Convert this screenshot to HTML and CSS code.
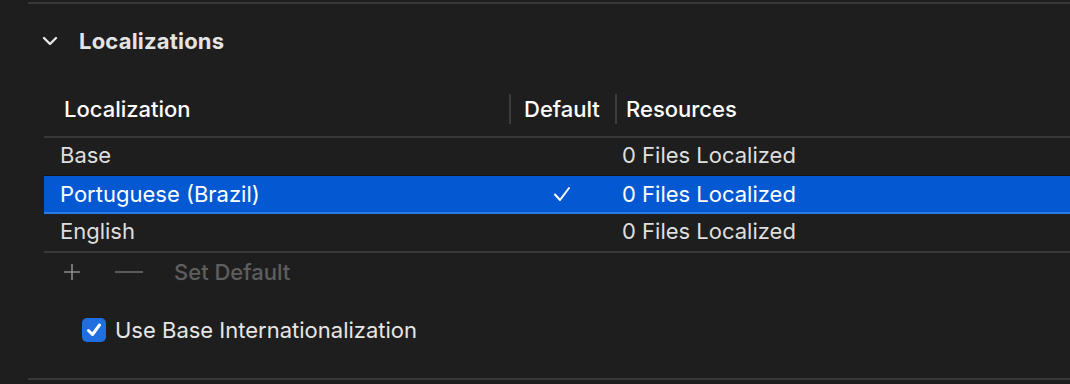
FILE: index.html
```html
<!DOCTYPE html>
<html>
<head>
<meta charset="utf-8">
<link rel="stylesheet" href="styles.css">
</head>
<body>
<div class="pane">
  <section class="section">
    <div class="section-head">
      <svg class="chevron" width="16" height="10" viewBox="0 0 16 10"><path d="M2 2 L8 8 L14 2" fill="none" stroke="#e6e6e6" stroke-width="2.4" stroke-linecap="round" stroke-linejoin="round"/></svg>
      <span class="section-title">Localizations</span>
    </div>
    <div class="table">
      <div class="thead">
        <div class="th th-loc">Localization</div>
        <div class="th th-def">Default</div>
        <div class="th th-res">Resources</div>
      </div>
      <div class="row">
        <div class="td td-loc">Base</div>
        <div class="td td-def"></div>
        <div class="td td-res">0 Files Localized</div>
      </div>
      <div class="row selected">
        <div class="td td-loc">Portuguese (Brazil)</div>
        <div class="td td-def"><svg width="18" height="16" viewBox="0 0 18 16"><path d="M2 8.5 L7 14 L16 2" fill="none" stroke="#ffffff" stroke-width="2" stroke-linecap="round" stroke-linejoin="round"/></svg></div>
        <div class="td td-res">0 Files Localized</div>
      </div>
      <div class="row">
        <div class="td td-loc">English</div>
        <div class="td td-def"></div>
        <div class="td td-res">0 Files Localized</div>
      </div>
    </div>
    <div class="toolbar">
      <svg class="tool plus" width="18" height="18" viewBox="0 0 18 18"><path d="M9 1 V17 M1 9 H17" stroke="#8a8a8a" stroke-width="1.6"/></svg>
      <svg class="tool minus" width="28" height="18" viewBox="0 0 28 18"><path d="M0 9 H28" stroke="#6a6a6a" stroke-width="1.6"/></svg>
      <span class="tool-text">Set Default</span>
    </div>
    <label class="check">
      <span class="box"><svg width="24" height="24" viewBox="0 0 24 24"><path d="M6.5 12.5 L10.5 16.5 L17.5 7" fill="none" stroke="#ffffff" stroke-width="3" stroke-linecap="round" stroke-linejoin="round"/></svg></span>
      <span class="check-label">Use Base Internationalization</span>
    </label>
  </section>
</div>
</body>
</html>
```

FILE: styles.css
```css
* { box-sizing: border-box; }
html, body {
  margin: 0;
  padding: 0;
  background: #1f1e1e;
  width: 1070px;
  height: 384px;
  overflow: hidden;
}
body {
  font-family: Inter, "Liberation Sans", sans-serif;
  color: #e2e2e2;
  -webkit-font-smoothing: antialiased;
}
.pane {
  padding-top: 2px;
  padding-left: 28px;
}
.section {
  border-top: 2px solid #383838;
  border-bottom: 2px solid #383838;
  height: 378px;
  padding-left: 16px;
}
.section-head {
  display: flex;
  align-items: center;
  height: 76px;
  padding-bottom: 2px;
}
.chevron {
  margin-left: -2px;
  margin-right: 21px;
}
.section-title {
  font-size: 22px;
  font-weight: 700;
  color: #e4e4e4;
  letter-spacing: 0.2px;
}
.thead {
  display: grid;
  grid-template-columns: 465px 106px 1fr;
  height: 58px;
  align-items: center;
  border-bottom: 2px solid #383838;
  padding-top: 2px;
}
.th {
  font-size: 22px;
  color: #ffffff;
  font-weight: 500;
  height: 30px;
  display: flex;
  align-items: center;
}
.th-loc { padding-left: 20px; }
.th-def { border-left: 2px solid #3c3c3c; padding-left: 13px; }
.th-res { border-left: 2px solid #3c3c3c; padding-left: 9px; }
.row {
  display: grid;
  grid-template-columns: 465px 106px 1fr;
  height: 37px;
  align-items: center;
  font-size: 22px;
  color: #dedede;
  padding-bottom: 3px;
}
.row.selected {
  background: #0459d2;
  color: #ffffff;
  border-top: 1px solid #151515;
  border-bottom: 2px solid #2b7ae6;
  height: 39px;
  padding-bottom: 1px;
}
.row:last-child {
  border-bottom: 2px solid #383838;
  height: 39px;
}
.td-loc { padding-left: 16px; }
.td-def { display: flex; justify-content: center; align-items: center; }
.td-res { padding-left: 7px; }
.toolbar {
  display: flex;
  align-items: center;
  height: 38px;
  padding-left: 19px;
}
.plus { margin-right: 34px; }
.minus { margin-right: 31px; }
.tool-text {
  font-size: 22px;
  color: #5e5e5e;
  font-weight: 500;
}
.check {
  display: flex;
  align-items: center;
  margin-top: 26px;
  padding-left: 38px;
}
.box {
  width: 24px;
  height: 24px;
  border-radius: 5px;
  background: #1f6fe0;
  display: inline-flex;
  margin-right: 9px;
}
.check-label {
  font-size: 22px;
  color: #e6e6e6;
}
```
